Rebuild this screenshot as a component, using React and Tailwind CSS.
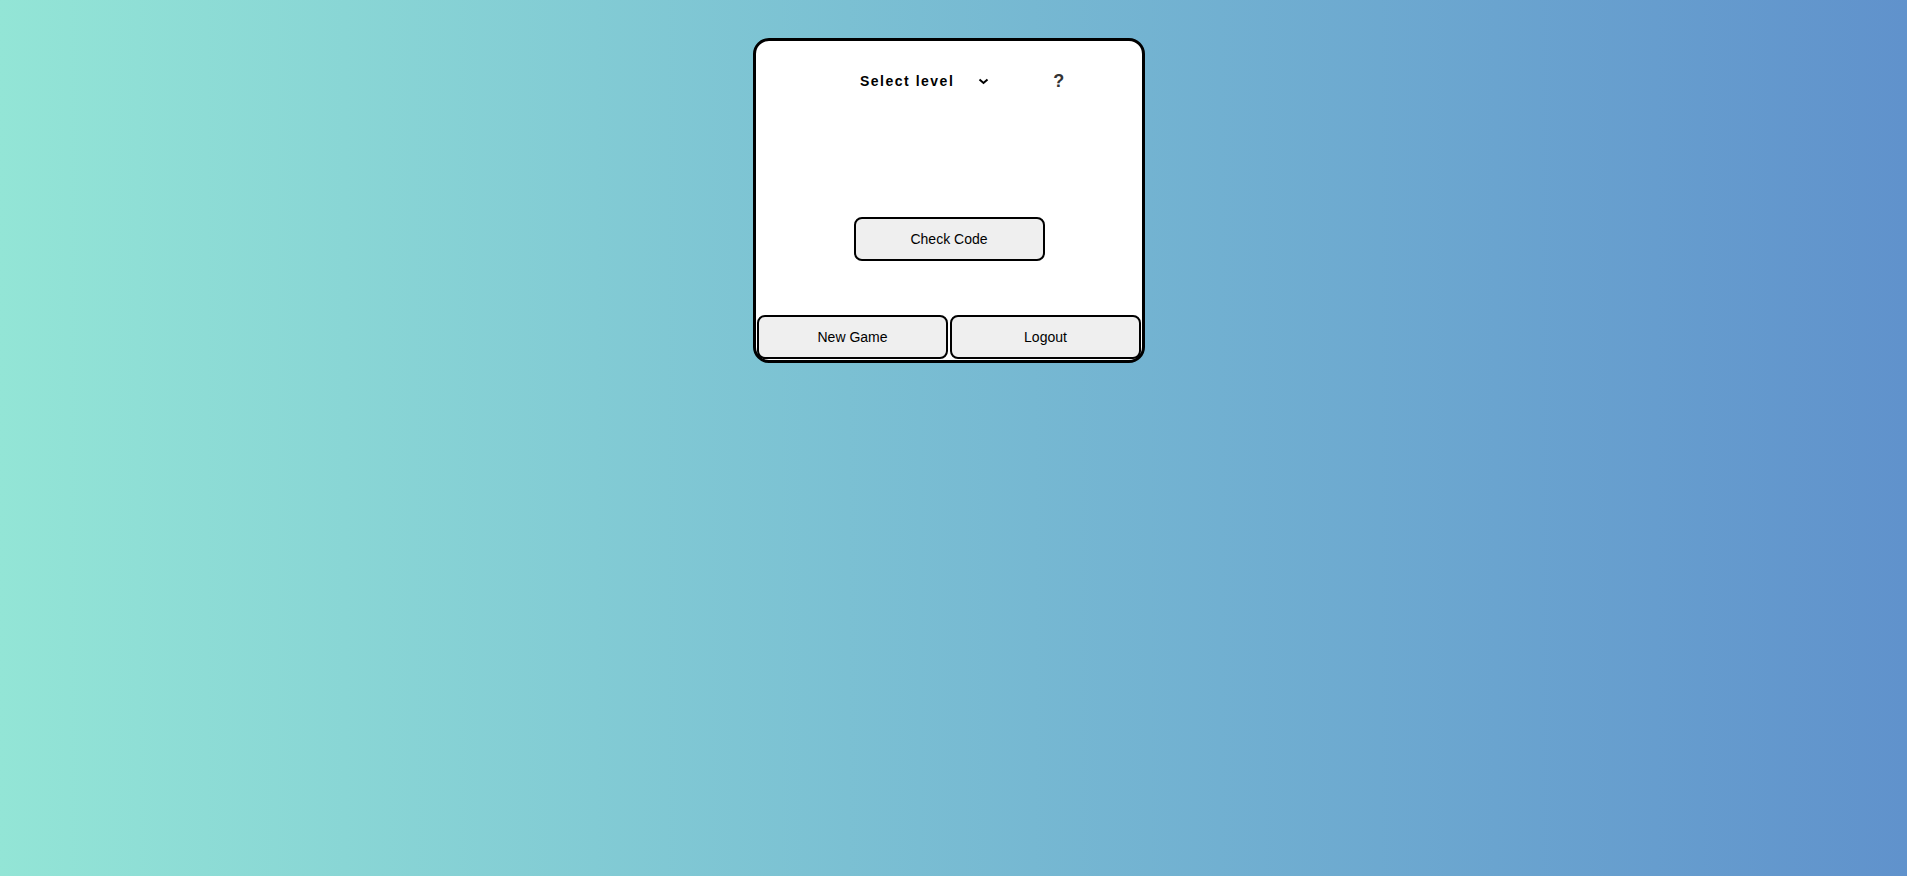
import React from "react";

const Chevron = () => (
  <svg width="11" height="7" viewBox="0 0 11 7" className="block">
    <path d="M1.5 1.5 L5.5 5 L9.5 1.5" fill="none" stroke="#000" strokeWidth="2" />
  </svg>
);

const App = () => {
  return (
    <div className="min-h-screen w-full bg-gradient-to-r from-[#93e5d6] to-[#6092cc] font-['Liberation_Sans',Arial,sans-serif]">
      <div className="flex justify-center pt-[38px] pr-[9px]">
        <div className="w-[392px] h-[325px] bg-white border-[3px] border-black rounded-[16px] flex flex-col">
          {/* header */}
          <div className="h-[80px] flex items-center pl-[104px]">
            <div className="flex items-center">
              <span className="text-[14px] font-bold tracking-[1.5px] text-black">Select level</span>
              <span className="ml-[24px]">
                <Chevron />
              </span>
            </div>
            <button className="ml-[64px] text-[18px] font-bold text-[#333] leading-none">?</button>
          </div>

          <div className="flex justify-center mt-[96px]">
            <button className="w-[191px] h-[44px] bg-[#efefef] border-2 border-black rounded-[8px] text-[14px] text-black">
              Check Code
            </button>
          </div>

          <div className="mt-auto mb-[1px] px-[1px] flex gap-[2px]">
            <button className="flex-1 h-[44px] bg-[#efefef] border-2 border-black rounded-[8px] text-[14px] text-black">
              New Game
            </button>
            <button className="flex-1 h-[44px] bg-[#efefef] border-2 border-black rounded-[8px] text-[14px] text-black">
              Logout
            </button>
          </div>
        </div>
      </div>
    </div>
  );
};

export default App;
